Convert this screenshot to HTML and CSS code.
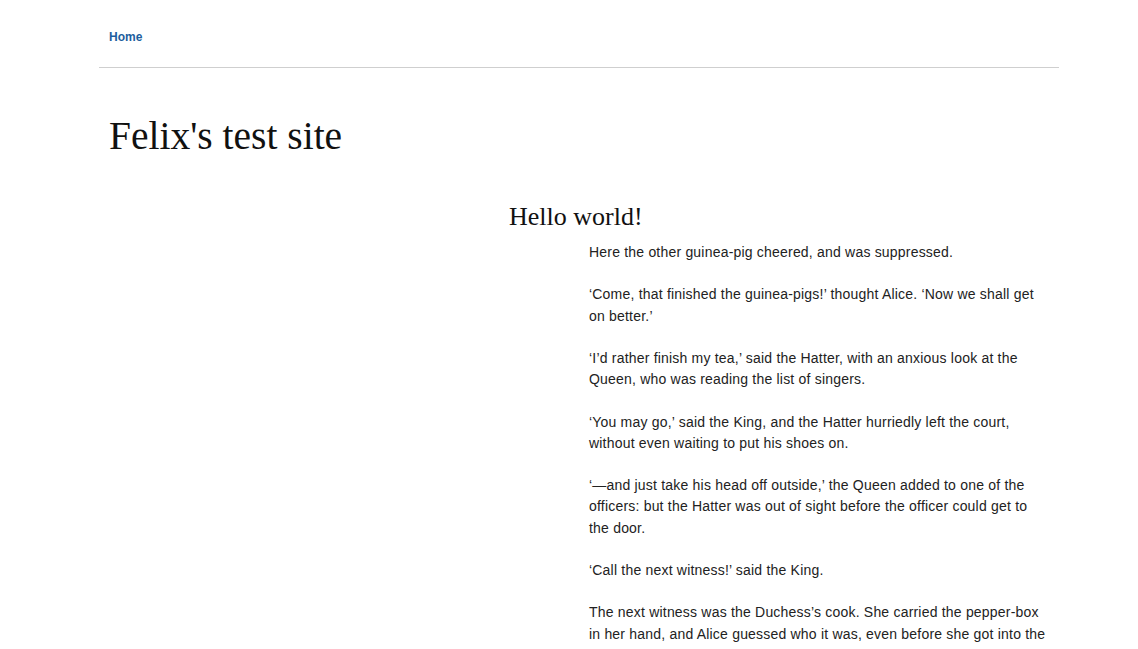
FILE: index.html
```html
<!DOCTYPE html>
<html>
<head>
<meta charset="utf-8">
<link rel="stylesheet" href="styles.css">
</head>
<body>
<div class="page">
  <nav class="topnav"><a href="#" class="nav-link">Home</a></nav>
  <header class="site-header"><h1 class="site-title">Felix's test site</h1></header>
  <main class="layout">
    <aside class="sidebar"></aside>
    <article class="post">
      <h2 class="post-title">Hello world!</h2>
      <div class="post-body">
        <p>Here the other guinea-pig cheered, and was suppressed.</p>
        <p>‘Come, that finished the guinea-pigs!’ thought Alice. ‘Now we shall get on better.’</p>
        <p>‘I’d rather finish my tea,’ said the Hatter, with an anxious look at the Queen, who was reading the list of singers.</p>
        <p>‘You may go,’ said the King, and the Hatter hurriedly left the court, without even waiting to put his shoes on.</p>
        <p>‘—and just take his head off outside,’ the Queen added to one of the officers: but the Hatter was out of sight before the officer could get to the door.</p>
        <p>‘Call the next witness!’ said the King.</p>
        <p>The next witness was the Duchess’s cook. She carried the pepper-box in her hand, and Alice guessed who it was, even before she got into the court, by the way the people near the door began sneezing all at once.</p>
      </div>
    </article>
  </main>
</div>
</body>
</html>
```
FILE: styles.css
```css
html, body { margin: 0; padding: 0; background: #fff; }
body { font-family: "Liberation Sans", Arial, sans-serif; color: #222; }
.page { width: 960px; margin-left: 99px; }
.topnav { display: block; padding: 30px 10px 0; height: 68px; box-sizing: border-box; border-bottom: 1px solid #cfcfcf; }
.nav-link { font-size: 12px; font-weight: bold; color: #1d5e9e; text-decoration: none; line-height: 15px; display: block; }
.site-header { padding: 46px 10px 0; }
.site-title { margin: 0; font-family: "Liberation Serif", "Times New Roman", serif; font-weight: normal; font-size: 39.5px; line-height: 44px; color: #111; }
.layout { display: flex; padding-top: 43px; }
.sidebar { width: 410px; flex: none; }
.post { flex: 1; padding-right: 10px; }
.post-title { margin: 0; font-family: "Liberation Serif", "Times New Roman", serif; font-weight: normal; font-size: 26px; line-height: 32px; color: #111; }
.post-body { padding-left: 80px; padding-top: 9px; font-size: 14px; line-height: 21.2px; letter-spacing: 0.2px; }
.post-body p { margin: 0 0 21.2px; }
```
